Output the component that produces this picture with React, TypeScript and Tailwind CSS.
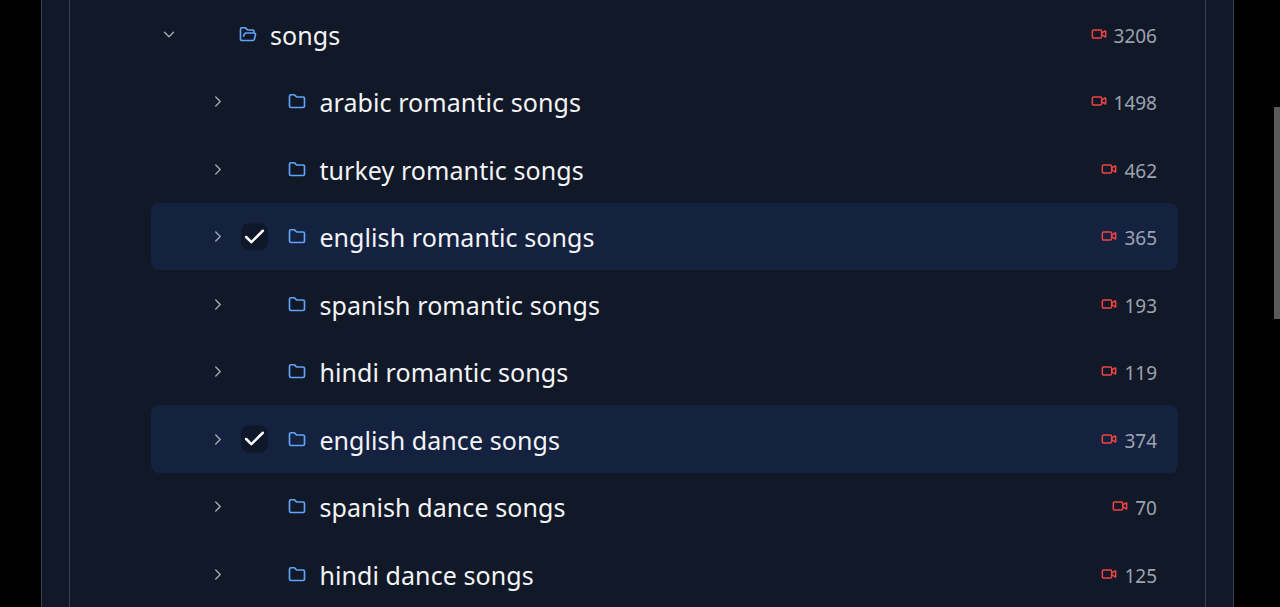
import { Check, ChevronDown, ChevronRight, Folder, FolderOpen, Video } from "lucide-react";

type RowProps = { name: string; count: string; open?: boolean; selected?: boolean };

function Row({ name, count, open, selected }: RowProps) {
  return (
    <div className={`flex h-[67.5px] items-center rounded-lg pr-[21px] ${selected ? "bg-[#14213f]" : ""}`}>
      <div className="flex w-[90px] items-center pl-[58px]">
        {open ? (
          <ChevronDown className="h-[18px] w-[18px] translate-y-[0.5px] text-[#9ca3af]" strokeWidth={2} />
        ) : (
          <ChevronRight className="h-[18px] w-[18px] translate-y-[0.5px] text-[#9ca3af]" strokeWidth={2} />
        )}
      </div>
      <div className="flex w-[46px] items-center justify-start">
        {selected && (
          <div className="flex h-[27px] w-[27px] translate-y-[0.5px] items-center justify-center rounded-lg bg-[#0f172a]">
            <Check className="h-[25px] w-[25px] shrink-0 text-white" strokeWidth={2.4} />
          </div>
        )}
      </div>
      <div className="flex w-[33px] items-center pl-[1px] translate-y-[0.5px]">
        {open ? (
          <FolderOpen className="h-[18px] w-[18px] text-[#60a5fa]" strokeWidth={2.25} />
        ) : (
          <Folder className="h-[18px] w-[18px] text-[#60a5fa]" strokeWidth={2.25} />
        )}
      </div>
      <span className="flex-1 -translate-x-[1px] translate-y-[0.5px] text-[25px] leading-8 tracking-[0.08px] text-[#f3f4f6]">{name}</span>
      <Video className="mr-[7px] h-4 w-4 text-[#ef4444]" strokeWidth={2.25} />
      <span className="translate-y-[1.5px] text-[19px] leading-7 text-[#9ca3af]">{count}</span>
    </div>
  );
}

const children: RowProps[] = [
  { name: "arabic romantic songs", count: "1498" },
  { name: "turkey romantic songs", count: "462" },
  { name: "english romantic songs", count: "365", selected: true },
  { name: "spanish romantic songs", count: "193" },
  { name: "hindi romantic songs", count: "119" },
  { name: "english dance songs", count: "374", selected: true },
  { name: "spanish dance songs", count: "70" },
  { name: "hindi dance songs", count: "125" },
];

export default function App() {
  return (
    <div
      className="relative h-[607px] overflow-hidden bg-black pl-[41px] pr-[46px]"
      style={{ fontFamily: '"Noto Sans", "Open Sans", sans-serif' }}
    >
      <div className="h-full border-x border-[#374151] bg-[#111827] px-[27px]">
        <div className="h-full border-x border-[#374151] pl-[32px] pr-[27px]">
          <Row name="songs" count="3206" open />
          <div className="ml-[49.4px]">
            {children.map((c) => (
              <Row key={c.name} {...c} />
            ))}
          </div>
        </div>
      </div>
      <div className="absolute right-0 top-[107px] h-[212px] w-[6px] bg-[#5a5a5a]" />
    </div>
  );
}
